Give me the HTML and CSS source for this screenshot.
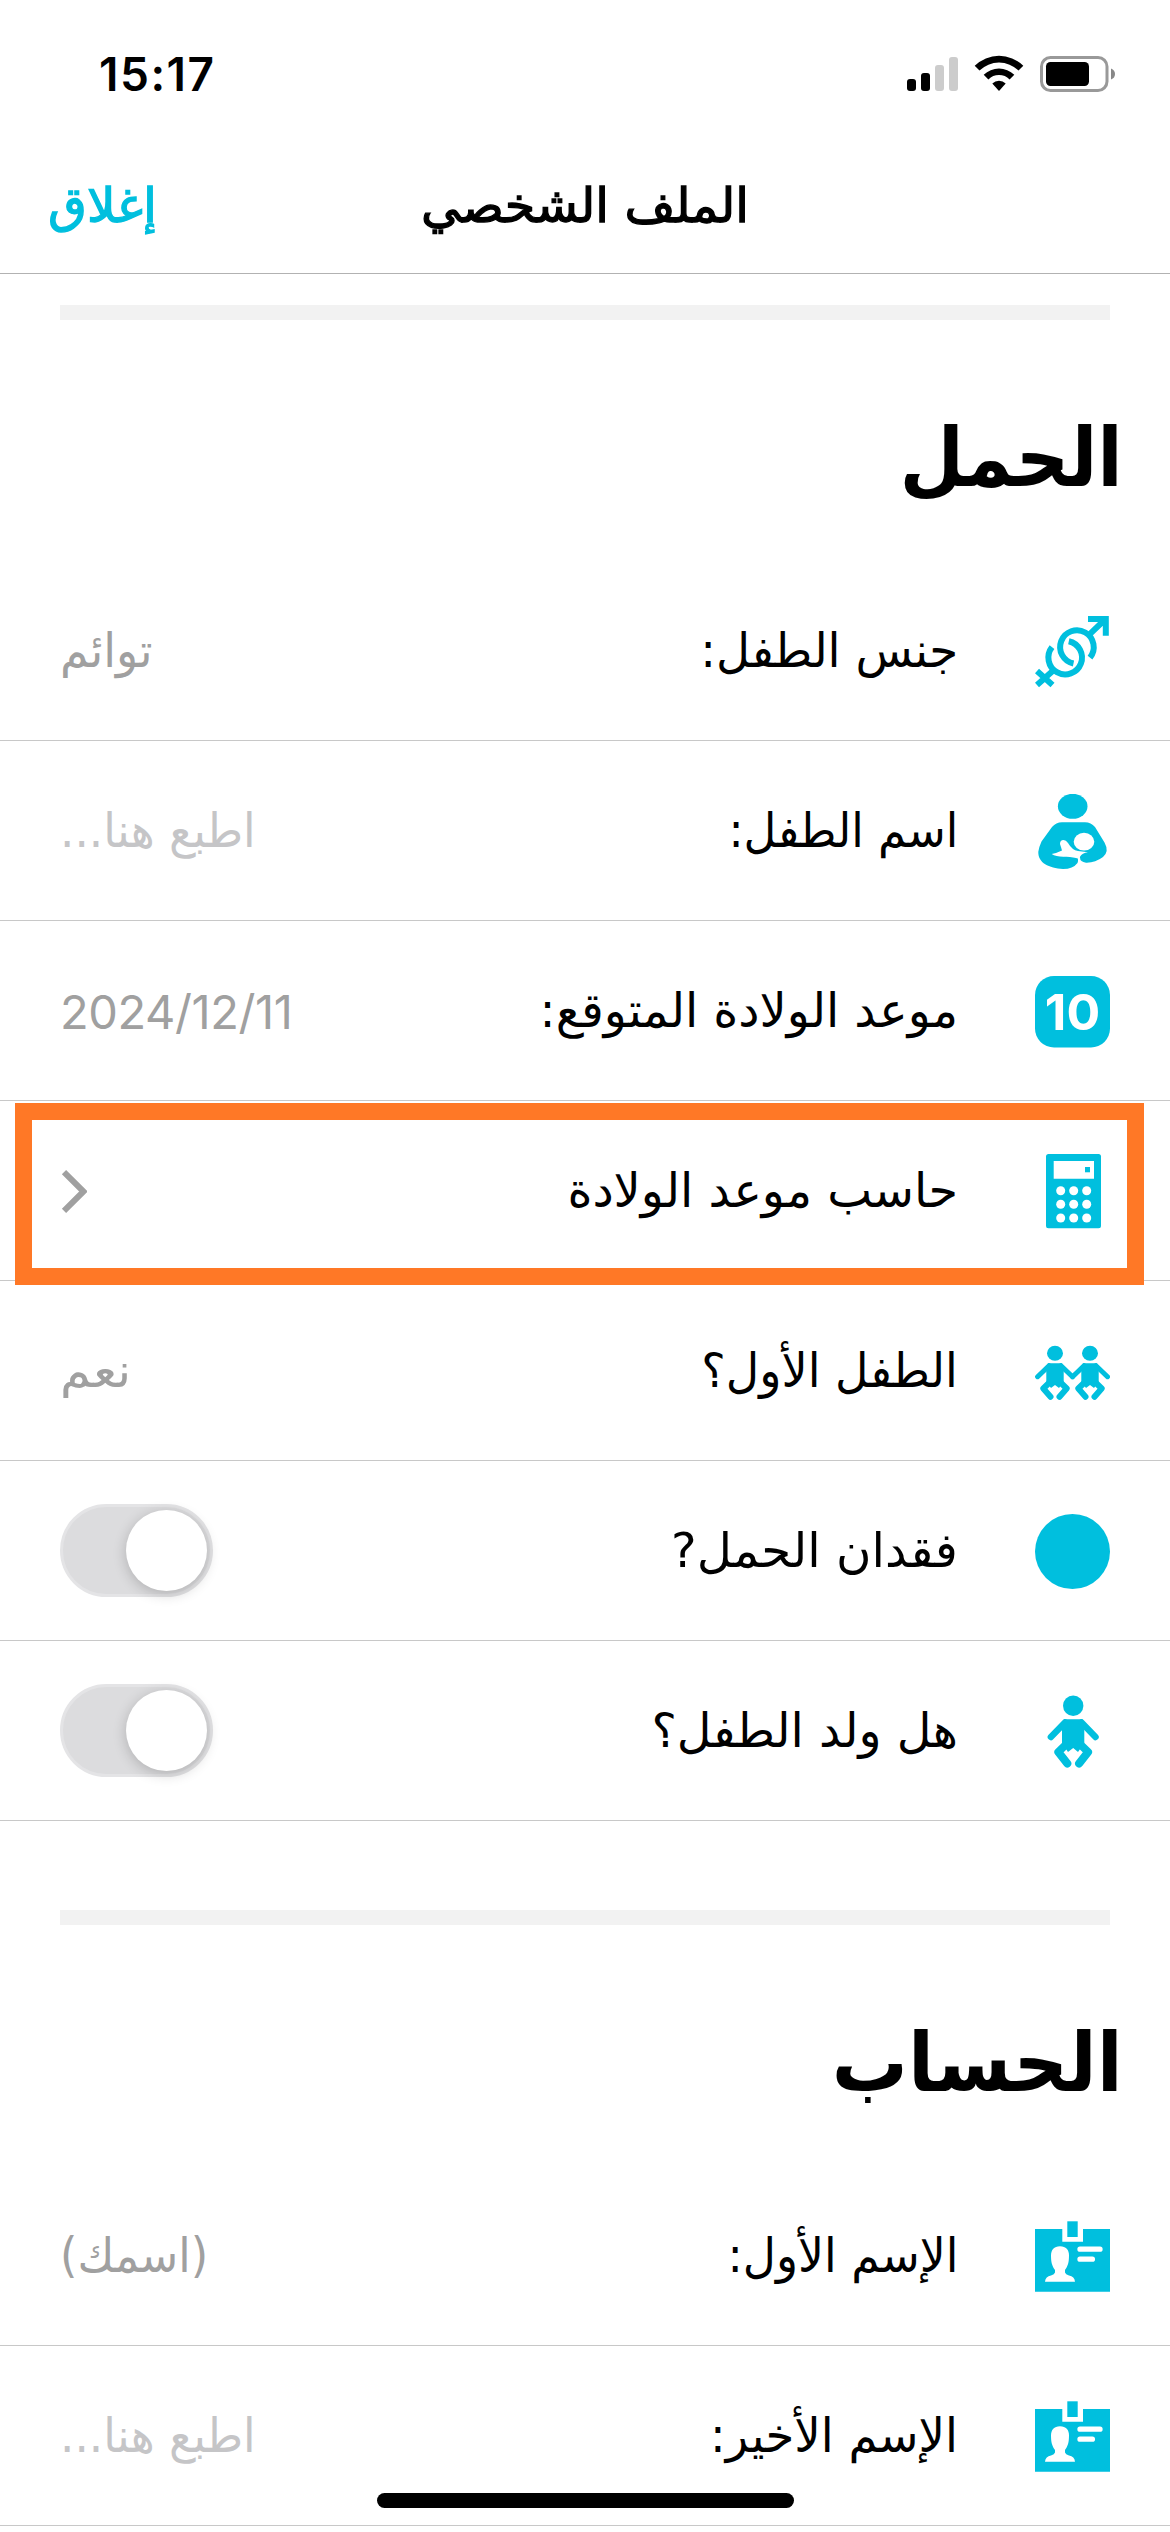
FILE: index.html
```html
<!DOCTYPE html>
<html lang="ar" dir="rtl">
<head>
<meta charset="utf-8">
<title>الملف الشخصي</title>
<link rel="stylesheet" href="styles.css">
</head>
<body>
<svg class="defs" aria-hidden="true">
  <symbol id="badge" viewBox="0 0 75 75">
    <path fill="currentColor" d="M0 10H27.3V22.7H48V10H75V72.7H0Z"/>
    <path fill="currentColor" d="M32.3 2.3H42.7V18H32.3Z"/>
    <path fill="#fff" d="M25 27.3C31 27.3 34 31 34 36.500C34 43 33 47 30 51V53.500Q30.500 55.500 34 56.500Q39.500 57.500 40 62.700H10Q10.500 57.500 16 56.500Q19.500 55.500 20 53.500V51C17 47 16 43 16 36.500C16 31 19 27.300 25 27.300Z"/>
    <path stroke="#fff" stroke-width="5.300" stroke-linecap="round" d="M45 30.200H65M45 40.200H57.400"/>
  </symbol>
</svg>

<header class="header">
  <div class="status" dir="ltr">
    <span class="time">15:17</span>
    <svg class="status-icons" viewBox="0 0 212 40" width="212" height="40">
      <rect x="2" y="25" width="9" height="12" rx="3"/>
      <rect x="16" y="19" width="9" height="18" rx="3"/>
      <rect x="30" y="11" width="9" height="26" rx="3" fill="#ccc"/>
      <rect x="44" y="3" width="9" height="34" rx="3" fill="#ccc"/>
      <path d="M69.700 11.800A34.500 34.500 0 0 1 118.300 11.800L113.500 16.600A27.800 27.800 0 0 0 74.500 16.600Z"/>
      <path d="M78.700 20.800A22 22 0 0 1 109.300 20.800L104.600 25.500A15 15 0 0 0 83.400 25.500Z"/>
      <path d="M87.300 29.400A9.800 9.800 0 0 1 100.700 29.400L94 37Z"/>
      <rect x="136.500" y="3.500" width="65.500" height="33" rx="9" fill="none" stroke="#999" stroke-width="3"/>
      <rect x="141" y="8" width="43" height="24" rx="4.500"/>
      <path fill="#888" d="M206 14.500Q210 16 210 20T206 25.500Z"/>
    </svg>
  </div>
  <nav class="nav">
    <span></span>
    <h1 class="title">الملف الشخصي</h1>
    <a class="close">إغلاق</a>
  </nav>
</header>

<main>
  <section class="section">
    <h2 class="heading"><span class="fit-1020">الحمل</span></h2>
    <div class="row">
      <svg class="icon" viewBox="0 0 75 75" fill="none" stroke="currentColor" stroke-width="6">
        <path d="M17 33.200A16.800 16.800 0 1 0 33.800 27.200M55 43.600A16.800 16.800 0 1 0 38.500 49.500"/>
        <path d="M53 4.900H70.800V21.700M54.500 20.300L69 6.500M18.500 56.200L2 71M2 57L17.500 71"/>
      </svg>
      <span class="label fit-980">جنس الطفل:</span>
      <span class="value fit-967">توائم</span>
    </div>
    <div class="row">
      <svg class="icon" viewBox="0 0 75 75" fill="currentColor">
        <ellipse cx="37.700" cy="12.300" rx="14.800" ry="12.500"/>
        <path d="M27 28.300H50Q56 28.300 60 33L69.500 48.500Q74.500 57.500 68 63Q60 69 51 68.700Q45 68 45 63.500Q44 61 41.500 62.700Q44 65 42.500 69Q38 75 28 75C14 74 3 69 3.300 57.700Q4 53 6.500 47.500L17 33Q21 28.300 27 28.300Z"/>
        <ellipse cx="49" cy="47.700" rx="10.300" ry="8.900" fill="#fff"/>
        <path fill="#fff" d="M25 50Q25 46 28.500 46Q31 46 33 49Q37 56 43 57L53 58.300Q47 59 45 62.800Q44 65 41 64C34 62 22 64 16.700 60Q22 59 27 56.500Q26 53 25 50Z"/>
      </svg>
      <span class="label fit-945">اسم الطفل:</span>
      <span class="value placeholder fit-955">اطبع هنا...</span>
    </div>
    <div class="row">
      <svg class="icon" viewBox="0 0 75 75" fill="currentColor">
        <rect y="2" width="75" height="71.500" rx="19"/>
        <text class="day" x="37.500" y="56" text-anchor="middle" direction="ltr">10</text>
      </svg>
      <span class="label">موعد الولادة المتوقع:</span>
      <span class="value date" dir="ltr">2024/12/11</span>
    </div>
    <div class="row highlighted">
      <svg class="icon" viewBox="0 0 75 75" fill="currentColor">
        <rect x="11" width="55" height="74.300" rx="2.500"/>
        <path fill="#fff" d="M18.700 7H59V24.700H18.700Z"/>
        <path d="M50 13H55V18.300H50Z"/>
        <g fill="#fff">
          <circle cx="25.700" cy="36.700" r="4.500"/><circle cx="38.700" cy="36.700" r="4.500"/><circle cx="51.700" cy="36.700" r="4.500"/>
          <circle cx="25.700" cy="50.300" r="4.500"/><circle cx="38.700" cy="50.300" r="4.500"/><circle cx="51.700" cy="50.300" r="4.500"/>
          <circle cx="25.700" cy="64" r="4.500"/><circle cx="38.700" cy="64" r="4.500"/><circle cx="51.700" cy="64" r="4.500"/>
        </g>
      </svg>
      <span class="label">حاسب موعد الولادة</span>
      <svg class="chevron" viewBox="0 0 27 43" width="27" height="43"><path d="M4 2.200L23.500 21.500L4 40.800" fill="none" stroke="#a0a0a0" stroke-width="6"/></svg>
    </div>
    <div class="row">
      <svg class="icon" viewBox="0 0 75 75">
        <g id="twin" fill="currentColor" stroke="currentColor" stroke-linecap="round" stroke-linejoin="round">
          <ellipse cx="20" cy="19.300" rx="8" ry="7.500" stroke="none"/>
          <path stroke="none" d="M13 29.200H27L28.700 34V48L24 54L20 51L16 54L11.300 48V34Z"/>
          <path fill="none" stroke-width="5" d="M14 31.700L2.600 42.700M26 31.700L37.500 42.700"/>
          <path fill="none" stroke-width="6" d="M14.500 48.500L8.300 54.500L15.500 62.800M25.500 48.500L31.700 54.500L24.500 62.800"/>
        </g>
        <use href="#twin" x="35"/>
      </svg>
      <span class="label fit-965">الطفل الأول؟</span>
      <span class="value fit-1050">نعم</span>
    </div>
    <div class="row">
      <svg class="icon" viewBox="0 0 75 75"><circle cx="37.500" cy="37.500" r="37.500" fill="currentColor"/></svg>
      <span class="label fit-1014">فقدان الحمل?</span>
      <span class="toggle"></span>
    </div>
    <div class="row">
      <svg class="icon" viewBox="0 0 75 75" fill="currentColor" stroke="currentColor" stroke-linecap="round" stroke-linejoin="round">
        <circle cx="38.200" cy="11.800" r="10.200" stroke="none"/>
        <path stroke="none" d="M29 25.300H47.500L49.300 32V49L43 58L38.200 54L33 58L27 49V32Z"/>
        <path fill="none" stroke-width="6.500" d="M30 28.500L15.900 43M46.500 28.500L60.500 43"/>
        <path fill="none" stroke-width="8" d="M31 50.500L23.300 58L32.300 69.500M45.400 50.500L53.100 58L44.100 69.500"/>
      </svg>
      <span class="label">هل ولد الطفل؟</span>
      <span class="toggle"></span>
    </div>
  </section>

  <section class="section">
    <h2 class="heading"><span class="fit-1040">الحساب</span></h2>
    <div class="row">
      <svg class="icon"><use href="#badge"/></svg>
      <span class="label fit-957">الإسم الأول:</span>
      <span class="value fit-940">(اسمك)</span>
    </div>
    <div class="row">
      <svg class="icon"><use href="#badge"/></svg>
      <span class="label fit-976">الإسم الأخير:</span>
      <span class="value placeholder fit-955">اطبع هنا...</span>
    </div>
  </section>
</main>
<div class="home-indicator"></div>
</body>
</html>
```
FILE: styles.css
```css
*, *::before, *::after { box-sizing: border-box; }
html, body { margin: 0; height: 2532px; overflow: hidden; }
body {
  width: 1170px;
  background: #fff;
  color: #000;
  font-family: "DejaVu Sans", sans-serif;
  font-size: 48px;
}
.defs { display: none; }

.header { height: 274px; border-bottom: 1px solid #b2b2b2; }
.status {
  display: flex;
  justify-content: space-between;
  height: 141px;
  padding: 54px 53px 0 99px;
}
.time {
  font: 600 46px/40px Inter, sans-serif;
  letter-spacing: 1.500px;
}
.status-icons { display: block; }
.nav {
  display: grid;
  grid-template-columns: 1fr auto 1fr;
  align-items: center;
  height: 132px;
  padding: 0 48px 4px;
}
.title, .close {
  margin: 0;
  font-size: 48px;
  font-weight: 400;
  -webkit-text-stroke: 1.300px currentColor;
}
.title { transform: scaleX(1.025); }
.close { justify-self: end; color: #00bfde; transform: scaleX(1.045); transform-origin: left; }

.section { margin-top: 31px; }
.section::before {
  content: "";
  display: block;
  height: 15px;
  margin: 0 60px;
  background: #f2f2f2;
}
.section + .section { margin-top: 89px; }
.heading {
  display: flex;
  align-items: center;
  height: 241px;
  margin: 0;
  padding: 34px 47px 0 0;
  font: 700 81px/120px "DejaVu Sans Condensed", "DejaVu Sans", sans-serif;
}

.row {
  display: flex;
  align-items: center;
  position: relative;
  height: 180px;
  padding: 2px 60px 0;
  border-bottom: 1px solid #c8c8c8;
}
.icon { flex: none; width: 75px; height: 75px; color: #00bfde; }
.day { font: 700 50px Inter, sans-serif; fill: #fff; }
.label {
  margin-right: 77px;
  padding-bottom: 2px;
  font-size: 47.700px;
  white-space: nowrap;
  transform-origin: right;
}
.value, .toggle, .chevron { margin-right: auto; }
.value {
  padding-bottom: 2px;
  color: #a0a0a0;
  font-size: 47.500px;
  white-space: nowrap;
  transform-origin: left;
}
.placeholder { color: #c5c5c7; }
.date { padding: 0; font: 400 47px Inter, sans-serif; letter-spacing: -0.400px; }
.heading span { transform-origin: right; }

/* Horizontal fit of individual strings */
.fit-940 { transform: scaleX(0.940); }
.fit-945 { transform: scaleX(0.945); }
.fit-955 { transform: scaleX(0.955); }
.fit-957 { transform: scaleX(0.957); }
.fit-965 { transform: scaleX(0.965); }
.fit-967 { transform: scaleX(0.967); }
.fit-976 { transform: scaleX(0.976); }
.fit-980 { transform: scaleX(0.980); }
.fit-1014 { transform: scaleX(1.014); }
.fit-1020 { transform: scaleX(1.020); }
.fit-1040 { transform: scaleX(1.040); }
.fit-1050 { transform: scaleX(1.050); }

.highlighted::after {
  content: "";
  position: absolute;
  left: 15px;
  top: 2px;
  width: 1129px;
  height: 182px;
  border: 17px solid #ff7826;
  z-index: 1;
}
.toggle {
  display: flex;
  width: 153px;
  height: 93px;
  margin-top: -2px;
  padding: 3px;
  border: 3px solid #e4e4e6;
  border-radius: 47px;
  background: #dcdcde;
}
.toggle::before {
  content: "";
  width: 81px;
  height: 81px;
  border-radius: 50%;
  background: #fff;
  box-shadow: 0 3px 14px rgba(0, 0, 0, 0.200);
}
.home-indicator {
  position: fixed;
  left: 377px;
  bottom: 24px;
  width: 417px;
  height: 15px;
  border-radius: 8px;
  background: #000;
}
```
